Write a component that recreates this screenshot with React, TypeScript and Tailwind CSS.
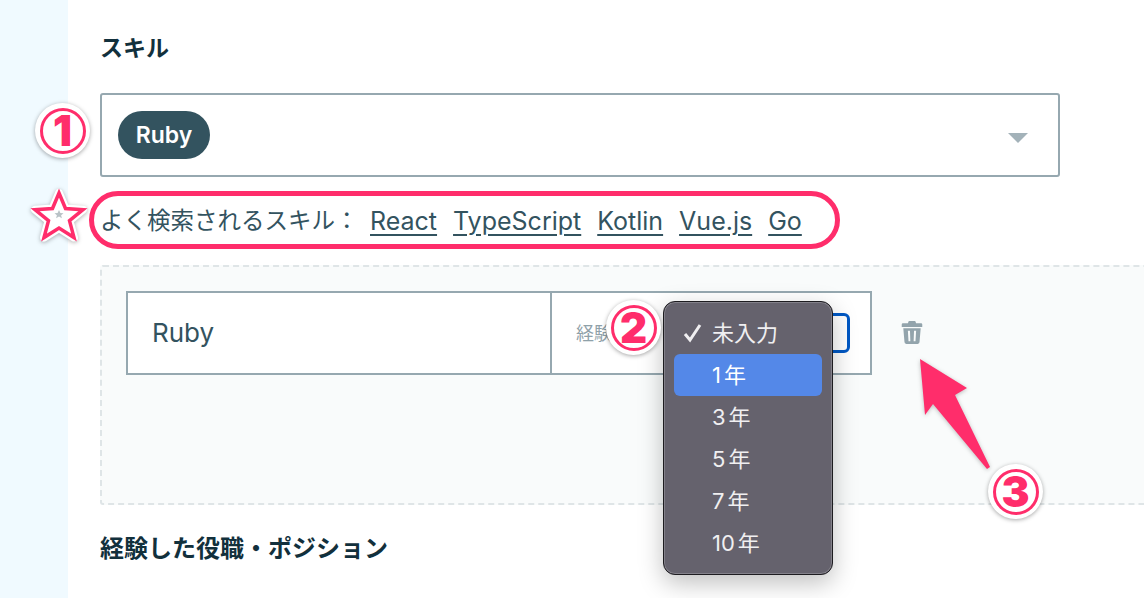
const years = ['3', '5', '7', '10']
const links = ['React', 'TypeScript', 'Kotlin', 'Vue.js', 'Go']

// numbered badge of the annotation layer
function Badge({ label, className }: { label: string, className: string }) {
  return (
    <div className={`absolute flex h-[55px] w-[55px] items-center justify-center rounded-full bg-white shadow-[0_1px_4px_rgba(0,0,0,0.35)] ${className}`}>
      <div className="flex h-[46px] w-[46px] items-center justify-center rounded-full border-[3px] border-[#ff2d6b] text-[42px] leading-none font-black text-[#ff2d6b]">
        {label}
      </div>
    </div>
  )
}

export default function App() {
  return (
    <div className="relative flex h-[598px] w-[1144px] overflow-hidden bg-white font-['Inter','Noto_Sans_CJK_JP',sans-serif] text-[#33535f]">
      <div className="w-[68px] shrink-0 bg-[#f0faff]" />

      <div className="min-w-0 flex-1 pl-[32px]">
        <h2 className="mt-[36px] h-[24px] text-[23px] leading-[24px] font-bold text-[#12303c]">スキル</h2>

        <div className="mt-[33px] flex h-[84px] w-[960px] items-center justify-between rounded-[3px] border-2 border-[#96a8b0] pr-[30px] pl-[16px]">
          <span className="flex h-[48px] w-[92px] items-center justify-center rounded-full bg-[#33535f] text-[23px] font-semibold text-white">Ruby</span>
          <span className="mt-[6px] h-0 w-0 border-x-[10px] border-t-[10px] border-x-transparent border-t-[#a3b2b9]" />
        </div>

        <div className="mt-[27px] flex h-[34px] items-center text-[23.5px] leading-[34px]">
          <span className="w-[270px] whitespace-nowrap">よく検索されるスキル：</span>
          <div className="flex gap-[16px] text-[25px]">
            {links.map((name) => (
              <a key={name} className="underline underline-offset-4">{name}</a>
            ))}
          </div>
        </div>

        <div className="mt-[27px] h-[240px] w-[1100px] rounded-l-[3px] border-2 border-r-0 border-dashed border-[#dfe5e7] bg-[#f9fbfb] pt-[24px] pl-[24px]">
          <div className="flex items-center">
            <div className="flex h-[84px] w-[746px] border-2 border-[#96a8b0] bg-white">
              <div className="flex w-[424px] items-center border-r-2 border-[#96a8b0] pl-[24px] text-[26px] leading-none">Ruby</div>
              <div className="flex flex-1 items-center pl-[24px]">
                <span className="whitespace-nowrap text-[18px] text-[#8fa1a9]">経験年数</span>
                <span className="ml-auto mr-[20px] h-[40px] w-[60px] rounded-[6px] border-[3px] border-[#0058c4]" />
              </div>
            </div>
            <svg className="ml-[29px] mb-[2px] h-[26px] w-[22px]" viewBox="0 0 24 26" fill="#93a4ac">
              <path d="M8.500 1h7l1 2.500H22a1.200 1.200 0 0 1 1.200 1.200V7.500H.8V4.700A1.200 1.200 0 0 1 2 3.500h5.500z" />
              <path fillRule="evenodd" d="M2.500 9h19l-1.300 15a2 2 0 0 1-2 2H5.800a2 2 0 0 1-2-2zM7.500 11.500l.7 11.500h2l-.4-11.500zm6.700 0l-.4 11.500h2l.7-11.500z" />
            </svg>
          </div>
        </div>

        <h2 className="mt-[32px] text-[24px] leading-[24px] font-bold text-[#12303c]">経験した役職・ポジション</h2>
      </div>

      <div className="absolute top-[301px] left-[663px] w-[170px] rounded-[12px] border border-[#1d1c20] bg-[#65626d] p-[10px] text-[22px] text-[#f0eff1] shadow-[0_8px_24px_rgba(0,0,0,0.25),inset_0_0_0_1px_rgba(255,255,255,0.2)]">
        <div className="relative flex h-[42px] items-center pl-[38px]">
          <svg className="absolute left-[9px] h-[20px] w-[20px]" viewBox="0 0 20 20" fill="none" stroke="#f0eff1" strokeWidth="3">
            <path d="M2 11l5 6L17 2" />
          </svg>
          未入力
        </div>
        <div className="flex h-[42px] items-center rounded-[6px] bg-[#5488e8] pl-[38px] text-white">
          <span>1</span><span className="ml-[3px]">年</span>
        </div>
        {years.map((year) => (
          <div key={year} className="flex h-[42px] items-center pl-[38px]">
            <span>{year}</span><span className="ml-[3px]">年</span>
          </div>
        ))}
      </div>

      <Badge label="1" className="top-[103px] left-[35px]" />
      <Badge label="2" className="top-[300px] left-[606px]" />
      <Badge label="3" className="top-[464px] left-[988px]" />

      <div className="absolute top-[191px] left-[89px] h-[58px] w-[751px] rounded-full border-[5px] border-[#ff2d6b]" />

      <svg className="absolute top-[186px] left-[30px] h-[58px] w-[58px] drop-shadow-[0_1px_2px_rgba(0,0,0,0.3)]" viewBox="0 0 58 58">
        <path d="M29 7l6.500 15.500 17.500 1.200-13.500 11 4.500 16.800L29 42 14 51.500l4.500-16.800-13.500-11 17.500-1.200z" fill="#fff" stroke="#fff" strokeWidth="8" strokeLinejoin="round" />
        <path d="M29 7l6.500 15.500 17.500 1.200-13.500 11 4.500 16.800L29 42 14 51.500l4.500-16.800-13.500-11 17.500-1.200z" fill="#fff" stroke="#ff2d6b" strokeWidth="3.500" />
        <path d="M29 24l1.400 3 3.100.2-2.400 2 .8 3L29 30.600 26.100 32.200l.8-3-2.400-2 3.100-.2z" fill="#b9c2c6" />
      </svg>

      <svg className="absolute top-[358px] left-[918px] h-[114px] w-[74px] drop-shadow-[0_1px_2px_rgba(0,0,0,0.25)]" viewBox="0 0 74 114">
        <path d="M2 1l47 29-12 7 35 72-3 2-54-65-8 11z" fill="#ff2d6b" />
      </svg>
    </div>
  )
}
